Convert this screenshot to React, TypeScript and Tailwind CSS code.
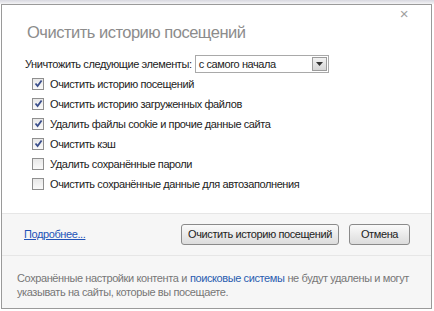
import React from 'react';

const items = [
  { label: 'Очистить историю посещений', checked: true },
  { label: 'Очистить историю загруженных файлов', checked: true },
  { label: 'Удалить файлы cookie и прочие данные сайта', checked: true },
  { label: 'Очистить кэш', checked: true },
  { label: 'Удалить сохранённые пароли', checked: false },
  { label: 'Очистить сохранённые данные для автозаполнения', checked: false },
];

const Check = ({ checked }: { checked: boolean }) => (
  <span className="w-[12px] h-[12px] border border-[#8f8f8f] bg-gradient-to-b from-[#e8e8e8] to-[#fafafa] flex items-center justify-center">
    {checked && (
      <svg width="9" height="9" viewBox="0 0 9 9">
        <path d="M1.5 4.5 L3.6 7 L7.6 1.5" fill="none" stroke="#3b4f8c" strokeWidth="1.8" />
      </svg>
    )}
  </span>
);

export default function App() {
  return (
    <div
      className="w-[434px] h-[311px] bg-white overflow-hidden text-[11px] tracking-[-0.4px]"
      style={{ fontFamily: '"Liberation Sans", Arial, sans-serif' }}
    >
      <div className="h-[4px] bg-gradient-to-b from-[#d8d8e0] to-[#f4f4f6]" />
      <div className="ml-[1px] w-[431px] h-[305px] border border-[#9a9a9a] bg-white flex flex-col">
        <div className="h-[208px] flex flex-col">
          <div className="flex justify-between">
            <div className="pl-[25px] pt-[15px] text-[16.5px] tracking-[-0.5px] text-[#8c8c8c]">
              Очистить историю посещений
            </div>
            <span className="pr-[23px] pt-[1px] text-[15px] leading-[15px] text-[#a0a0a0]">×</span>
          </div>
          <div className="flex items-center pl-[23px] mt-[10px] text-[#222]">
            <span>Уничтожить следующие элементы:</span>
            <div className="ml-[3px] w-[134px] h-[18px] border border-[#a9a9a9] flex items-center justify-between pl-[3px] pr-[1px]">
              <span>с самого начала</span>
              <span className="w-[15px] h-[14px] border border-[#9c9c9c] bg-gradient-to-b from-[#f2f2f2] to-[#d6d6d6] flex items-center justify-center">
                <svg width="7" height="4" viewBox="0 0 7 4">
                  <path d="M0 0 H7 L3.5 4 Z" fill="#333" />
                </svg>
              </span>
            </div>
          </div>
          <div className="pl-[30px] mt-[1px] flex flex-col text-[#222]">
            {items.map((it) => (
              <div key={it.label} className="h-[20px] flex items-center gap-[6px]">
                <Check checked={it.checked} />
                <span>{it.label}</span>
              </div>
            ))}
          </div>
        </div>
        <div className="h-[43px] bg-[#f6f6f6] border-t border-b border-[#e6e6e6] flex items-center justify-between pl-[22px] pr-[21px]">
          <span className="text-[#2254b8] underline">Подробнее...</span>
          <div className="flex gap-[10px]">
            <button className="w-[158px] h-[21px] border border-[#8a8a8a] rounded-[3px] bg-gradient-to-b from-[#fafafa] to-[#dcdcdc] text-[#222]">
              Очистить историю посещений
            </button>
            <button className="w-[61px] h-[21px] border border-[#8a8a8a] rounded-[3px] bg-gradient-to-b from-[#fafafa] to-[#dcdcdc] text-[#222]">
              Отмена
            </button>
          </div>
        </div>
        <div className="flex-1 bg-[#f6f6f6] pl-[15px] pt-[15px] leading-[14px] text-[#777] flex flex-col">
          <div className="flex gap-[3px]">
            <span>Сохранённые настройки контента и</span>
            <span className="text-[#2a5db0]">поисковые системы</span>
            <span>не будут удалены и могут</span>
          </div>
          <div>указывать на сайты, которые вы посещаете.</div>
        </div>
      </div>
    </div>
  );
}
